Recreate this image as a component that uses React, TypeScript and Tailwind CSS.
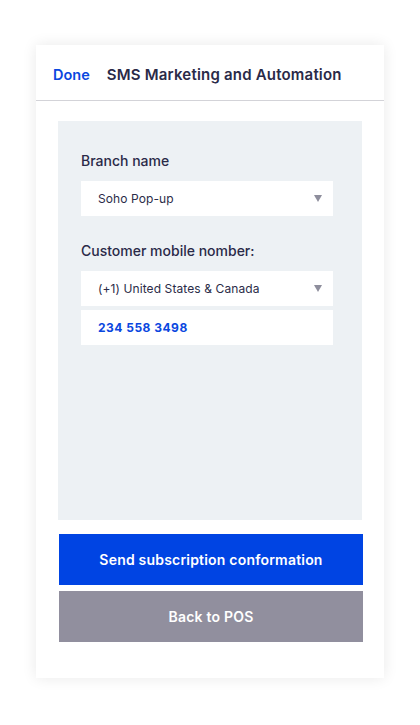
import React from 'react';

const font = { fontFamily: 'Inter, "Noto Sans", sans-serif' };

const Caret = () => (
  <svg width="8" height="7" viewBox="0 0 8 7" className="shrink-0">
    <path d="M0 0h8L4 7z" fill="#8e8e9c" />
  </svg>
);

const SelectBox: React.FC<{ value: string }> = ({ value }) => (
  <div className="flex items-center justify-between bg-white h-[35px] pl-[17px] pr-[11px]">
    <span className="text-[12px] text-[#2b2c48] tracking-[0.1px]">{value}</span>
    <Caret />
  </div>
);

export default function App() {
  return (
    <div className="min-h-[725px] bg-white pt-[45px] pl-[36px]" style={font}>
      <div className="w-[348px] h-[633px] bg-white shadow-[0_0_14px_rgba(0,0,0,0.09)] flex flex-col">
        <div className="h-[56px] flex items-center pt-[5px] px-[17px] gap-[17px] border-b border-[#d3d3d8]">
          <button className="text-[14.5px] font-semibold text-[#0a47df]">Done</button>
          <h1 className="text-[15px] font-semibold text-[#2a2a48] tracking-[0.2px]">SMS Marketing and Automation</h1>
        </div>

        <div className="px-[22px] pt-[20px] flex flex-col">
          <div className="bg-[#edf1f4] h-[399px] pl-[23px] pr-[29px] pt-[31px]">
            <label className="block text-[14px] font-medium text-[#2a2a48] mb-[11px] leading-[18px]">Branch name</label>
            <SelectBox value="Soho Pop-up" />

            <label className="block text-[14px] font-medium text-[#2a2a48] mt-[26px] mb-[11px] leading-[18px]">
              Customer mobile nomber:
            </label>
            <SelectBox value="(+1) United States & Canada" />
            <div className="bg-white h-[35px] mt-[4px] flex items-center pl-[17px]">
              <span className="text-[12px] font-bold text-[#0a47df] tracking-[0.5px]">234 558 3498</span>
            </div>
          </div>

          <button className="mt-[14px] h-[51px] w-[304px] ml-[1px] bg-[#0044e3] text-white text-[14px] font-semibold tracking-[0.2px]">
            Send subscription conformation
          </button>
          <button className="mt-[6px] h-[51px] w-[304px] ml-[1px] bg-[#918f9e] text-white text-[14px] font-semibold tracking-[0.2px]">
            Back to POS
          </button>
        </div>
      </div>
    </div>
  );
}
